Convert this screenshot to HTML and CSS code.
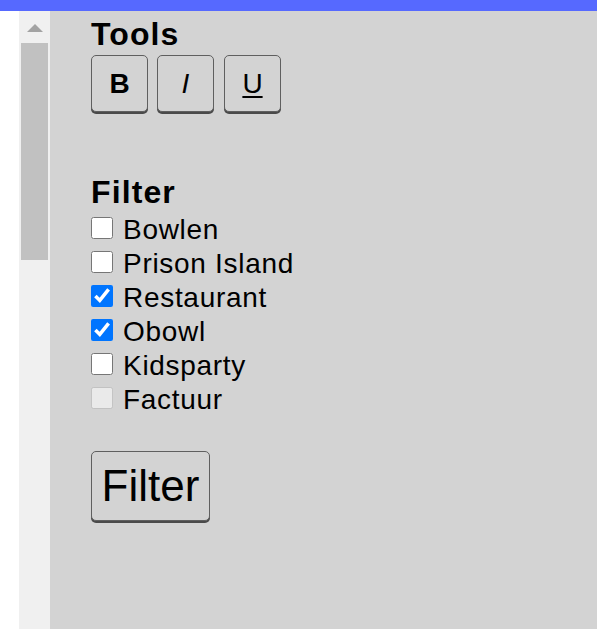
FILE: index.html
```html
<!DOCTYPE html>
<html>
<head>
<meta charset="utf-8">
<link rel="stylesheet" href="styles.css">
</head>
<body>
<div class="topbar"></div>
<div class="layout">
  <div class="gutter"></div>
  <div class="scrollbar">
    <div class="arrow"></div>
    <div class="thumb"></div>
  </div>
  <main class="panel">
    <h2 class="heading">Tools</h2>
    <div class="tools">
      <button class="tool bold">B</button>
      <button class="tool italic">I</button>
      <button class="tool under">U</button>
    </div>
    <h2 class="heading filter-heading">Filter</h2>
    <div class="options">
      <label class="option"><input type="checkbox"><span>Bowlen</span></label>
      <label class="option"><input type="checkbox"><span>Prison Island</span></label>
      <label class="option"><input type="checkbox" checked><span>Restaurant</span></label>
      <label class="option"><input type="checkbox" checked><span>Obowl</span></label>
      <label class="option"><input type="checkbox"><span>Kidsparty</span></label>
      <label class="option"><input type="checkbox" disabled><span>Factuur</span></label>
    </div>
    <button class="submit">Filter</button>
  </main>
</div>
</body>
</html>
```
FILE: styles.css
```css
html, body {
  margin: 0;
  padding: 0;
  background: #ffffff;
  font-family: "Liberation Sans", Arial, sans-serif;
  color: #000;
}
.topbar {
  height: 11px;
  background: #5669ff;
}
.layout {
  display: flex;
  height: 618px;
}
.gutter {
  width: 19px;
  background: #ffffff;
}
.scrollbar {
  width: 31px;
  background: #f0f0f0;
  display: flex;
  flex-direction: column;
  align-items: center;
}
.arrow {
  margin-top: 13px;
  width: 0;
  height: 0;
  border-left: 8px solid transparent;
  border-right: 8px solid transparent;
  border-bottom: 8px solid #a3a3a3;
}
.thumb {
  margin-top: 11px;
  width: 27px;
  height: 217px;
  background: #c1c1c1;
}
.panel {
  flex: 1;
  background: #d3d3d3;
  padding: 5px 0 0 41px;
  box-sizing: border-box;
}
.heading {
  margin: 0;
  font-size: 32px;
  line-height: 36px;
  font-weight: bold;
  letter-spacing: 1.1px;
}
.tools {
  display: flex;
  gap: 9px;
  margin-top: 3px;
}
.tool {
  width: 57px;
  height: 57px;
  padding: 0;
  background: #d3d3d3;
  border: 1px solid #5f5f5f;
  border-radius: 5px;
  box-shadow: 0 2px 0 #4a4a4a;
  font-family: "Liberation Sans", Arial, sans-serif;
  font-size: 28px;
  color: #000;
}
.bold { font-weight: bold; }
.italic { font-style: italic; }
.under { text-decoration: underline; text-underline-offset: 3px; margin-left: 1px; }
.filter-heading {
  margin-top: 62px;
}
.options {
  margin-top: 3px;
  display: flex;
  flex-direction: column;
}
.option {
  display: flex;
  align-items: flex-start;
  height: 34px;
  font-size: 28px;
  line-height: 34px;
  letter-spacing: 0.7px;
}
.option input {
  width: 22px;
  height: 22px;
  margin: 4px 10px 0 0;
}
.submit {
  margin-top: 34px;
  width: 119px;
  height: 70px;
  padding: 0;
  background: #d3d3d3;
  border: 1px solid #5f5f5f;
  border-radius: 5px;
  box-shadow: 0 2px 0 #4a4a4a;
  font-family: "Liberation Sans", Arial, sans-serif;
  font-size: 44px;
  color: #000;
}
```
